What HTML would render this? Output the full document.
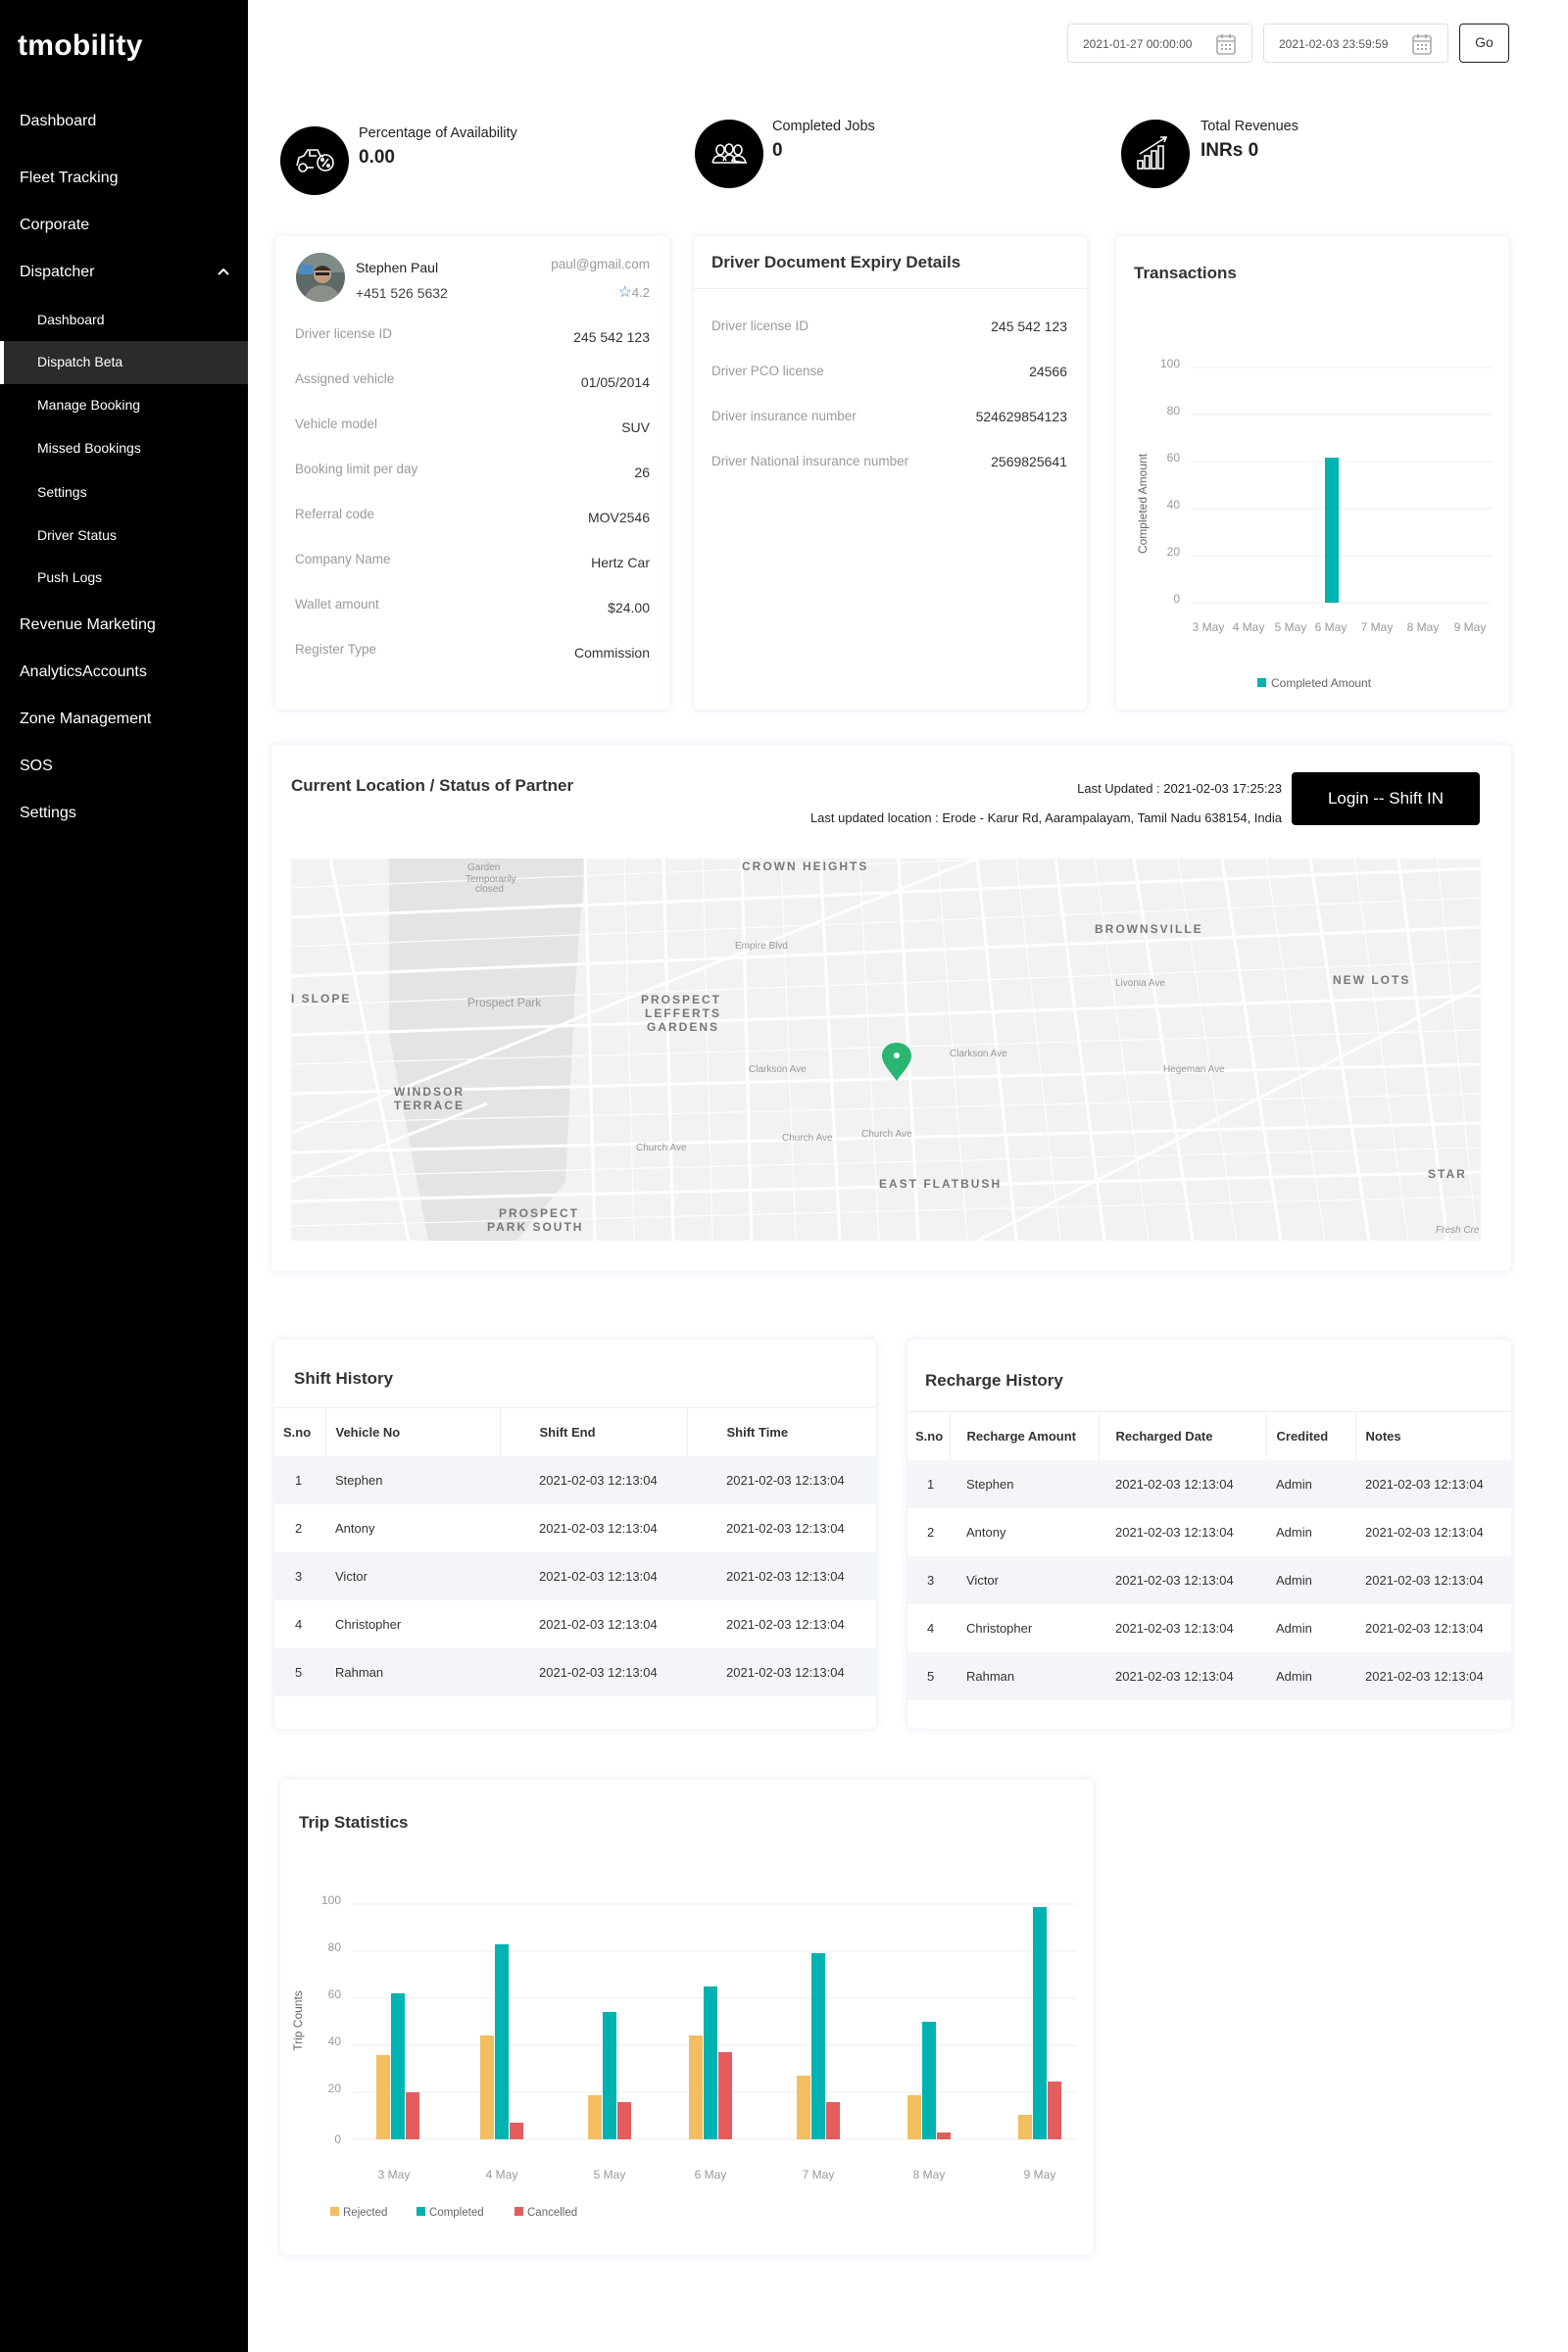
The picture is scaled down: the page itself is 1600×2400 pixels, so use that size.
<!DOCTYPE html>
<html><head><meta charset="utf-8">
<style>
*{margin:0;padding:0;box-sizing:border-box}
body{width:1600px;height:2400px;background:#fff;font-family:"Liberation Sans",sans-serif;color:#333;position:relative;overflow:hidden}
.a{position:absolute}
#side{left:0;top:0;width:253px;height:2400px;background:#000;color:#fff}
#side .m{position:absolute;left:20px;font-size:16px;color:#fff}
#side .s{position:absolute;left:38px;font-size:14px;color:#fff}
.card{position:absolute;background:#fff;border-radius:6px;box-shadow:0 0 6px 2px rgba(200,215,240,.35)}
.lbl{position:absolute;left:20px;font-size:13.5px;color:#9a9a9a}
.val{position:absolute;right:20px;font-size:14px;color:#333}
.inp{position:absolute;top:24px;height:40px;border:1px solid #ddd;border-radius:4px;font-size:12px;color:#555;padding:13px 0 0 15px}
.cal{position:absolute;right:16px;top:9px}
.stt{font-size:14.5px;color:#222}
.stv{font-size:19px;font-weight:bold;color:#222;margin-top:6px}
.circ{position:absolute;width:70px;height:70px;border-radius:50%;background:#000}
table{border-collapse:collapse;font-size:13px;color:#333;width:100%}
th{font-weight:bold;text-align:left;height:49px;font-size:13px;color:#333}
td{height:49px}
tbody tr:nth-child(odd){background:#f4f5f8}
h3{font-size:17px;font-weight:bold;color:#333;position:absolute}
</style></head><body>
<div id="side" class="a">
<div class="a" style="left:18px;top:30px;font-size:30px;font-weight:bold;letter-spacing:0.3px">tmobility</div>
<div class="m" style="top:115px">Dashboard</div>
<div class="m" style="top:173px">Fleet Tracking</div>
<div class="m" style="top:221px">Corporate</div>
<div class="m" style="top:269px">Dispatcher</div>
<svg class="a" style="left:221px;top:272px" width="14" height="10"><path d="M2 8 L7 3 L12 8" stroke="#fff" stroke-width="2" fill="none"/></svg>
<div class="s" style="top:318px">Dashboard</div>
<div class="a" style="left:0;top:348px;width:253px;height:44px;background:#2b2b2b;border-left:4px solid #fff"></div>
<div class="s" style="top:361px">Dispatch Beta</div>
<div class="s" style="top:405px">Manage Booking</div>
<div class="s" style="top:449px">Missed Bookings</div>
<div class="s" style="top:494px">Settings</div>
<div class="s" style="top:538px">Driver Status</div>
<div class="s" style="top:581px">Push Logs</div>
<div class="m" style="top:629px">Revenue Marketing</div>
<div class="m" style="top:677px">AnalyticsAccounts</div>
<div class="m" style="top:725px">Zone Management</div>
<div class="m" style="top:773px">SOS</div>
<div class="m" style="top:821px">Settings</div>
</div>

<!-- top inputs -->
<div class="inp" style="left:1089px;width:189px">2021-01-27 00:00:00
<svg class="cal" width="20" height="22" viewBox="0 0 20 22"><rect x="1" y="3" width="18" height="18" rx="2" fill="none" stroke="#aaa" stroke-width="1.6"/><line x1="1" y1="8" x2="19" y2="8" stroke="#aaa" stroke-width="1.6"/><line x1="6" y1="1" x2="6" y2="5" stroke="#aaa" stroke-width="2"/><line x1="14" y1="1" x2="14" y2="5" stroke="#aaa" stroke-width="2"/><g fill="#aaa"><rect x="5" y="11" width="2" height="2"/><rect x="9" y="11" width="2" height="2"/><rect x="13" y="11" width="2" height="2"/><rect x="5" y="15" width="2" height="2"/><rect x="9" y="15" width="2" height="2"/><rect x="13" y="15" width="2" height="2"/></g></svg></div>
<div class="inp" style="left:1289px;width:189px">2021-02-03 23:59:59
<svg class="cal" width="20" height="22" viewBox="0 0 20 22"><rect x="1" y="3" width="18" height="18" rx="2" fill="none" stroke="#aaa" stroke-width="1.6"/><line x1="1" y1="8" x2="19" y2="8" stroke="#aaa" stroke-width="1.6"/><line x1="6" y1="1" x2="6" y2="5" stroke="#aaa" stroke-width="2"/><line x1="14" y1="1" x2="14" y2="5" stroke="#aaa" stroke-width="2"/><g fill="#aaa"><rect x="5" y="11" width="2" height="2"/><rect x="9" y="11" width="2" height="2"/><rect x="13" y="11" width="2" height="2"/><rect x="5" y="15" width="2" height="2"/><rect x="9" y="15" width="2" height="2"/><rect x="13" y="15" width="2" height="2"/></g></svg></div>
<div class="a" style="left:1489px;top:24px;width:51px;height:40px;border:1.5px solid #222;border-radius:4px;font-size:14px;text-align:center;line-height:37px">Go</div>

<!-- stats -->
<div class="circ" style="left:286px;top:129px"><svg width="70" height="70" viewBox="0 0 70 70"><g stroke="#fff" stroke-width="1.6" fill="none"><path d="M17 40 L19 32 L24 30 L28 24 L38 24 L41 30 L44 31"/><circle cx="23" cy="42" r="4"/><path d="M27 42 L34 42"/><circle cx="46" cy="37" r="8"/><path d="M43 41 L49 33"/><circle cx="43" cy="34" r="1.2"/><circle cx="49" cy="40" r="1.2"/><path d="M30 25 L30 30 L37 30"/></g></svg></div>
<div class="a" style="left:366px;top:128px"><div class="stt">Percentage of Availability</div><div class="stv">0.00</div></div>
<div class="circ" style="left:709px;top:122px"><svg width="70" height="70" viewBox="0 0 70 70"><g stroke="#fff" stroke-width="1.6" fill="none"><ellipse cx="26" cy="31" rx="4" ry="5"/><ellipse cx="35" cy="30" rx="4" ry="5"/><ellipse cx="44" cy="31" rx="4" ry="5"/><path d="M18 44 Q20 36 26 37 Q30 37 32 42 M29 42 Q31 36 35 36 Q40 36 41 42 M38 42 Q40 37 44 37 Q50 37 52 44 Z M18 44 L52 44"/></g></svg></div>
<div class="a" style="left:788px;top:121px"><div class="stt">Completed Jobs</div><div class="stv">0</div></div>
<div class="circ" style="left:1144px;top:122px"><svg width="70" height="70" viewBox="0 0 70 70"><g stroke="#fff" stroke-width="1.6" fill="none"><rect x="17" y="42" width="5" height="8"/><rect x="24" y="37" width="5" height="13"/><rect x="31" y="32" width="5" height="18"/><rect x="38" y="27" width="5" height="23"/><path d="M19 35 L46 18 M40 18 L46 18 L44 23"/></g></svg></div>
<div class="a" style="left:1225px;top:121px"><div class="stt">Total Revenues</div><div class="stv">INRs 0</div></div>

<!-- card 1 -->
<div class="card" style="left:281px;top:241px;width:402px;height:483px">
<svg class="a" style="left:21px;top:17px" width="50" height="50" viewBox="0 0 50 50"><defs><clipPath id="cp"><circle cx="25" cy="25" r="25"/></clipPath></defs><g clip-path="url(#cp)"><rect width="50" height="50" fill="#5e6a6a"/><rect x="0" y="0" width="50" height="20" fill="#7f8b86"/><rect x="3" y="12" width="14" height="10" fill="#4a8ac0"/><circle cx="27" cy="22" r="9" fill="#c49a7c"/><path d="M18 18 Q27 8 36 18" fill="#3a2d25"/><path d="M8 50 Q12 33 27 33 Q42 33 46 50 Z" fill="#8a8f88"/><rect x="20" y="20" width="14" height="3" fill="#222"/></g></svg>
<div class="a" style="left:82px;top:24px;font-size:14px;color:#222">Stephen Paul</div>
<div class="a" style="left:82px;top:50px;font-size:14px;color:#444">+451 526 5632</div>
<div class="a" style="right:20px;top:21px;font-size:13.5px;color:#999">paul@gmail.com</div>
<div class="a" style="right:20px;top:47px;font-size:13px;color:#999"><span style="color:#3a7de0;font-size:16px">☆</span>4.2</div>
<div class="lbl" style="top:92px">Driver license ID</div><div class="val" style="top:95px">245 542 123</div>
<div class="lbl" style="top:138px">Assigned vehicle</div><div class="val" style="top:141px">01/05/2014</div>
<div class="lbl" style="top:184px">Vehicle model</div><div class="val" style="top:187px">SUV</div>
<div class="lbl" style="top:230px">Booking limit per day</div><div class="val" style="top:233px">26</div>
<div class="lbl" style="top:276px">Referral code</div><div class="val" style="top:279px">MOV2546</div>
<div class="lbl" style="top:322px">Company Name</div><div class="val" style="top:325px">Hertz Car</div>
<div class="lbl" style="top:368px">Wallet amount</div><div class="val" style="top:371px">$24.00</div>
<div class="lbl" style="top:414px">Register Type</div><div class="val" style="top:417px">Commission</div>
</div>

<!-- card 2 -->
<div class="card" style="left:708px;top:241px;width:401px;height:483px">
<h3 style="left:18px;top:17px">Driver Document Expiry Details</h3>
<div class="a" style="left:0;top:53px;width:401px;height:1px;background:#eee"></div>
<div class="lbl" style="top:84px;left:18px">Driver license ID</div><div class="val" style="top:84px">245 542 123</div>
<div class="lbl" style="top:130px;left:18px">Driver PCO license</div><div class="val" style="top:130px">24566</div>
<div class="lbl" style="top:176px;left:18px">Driver insurance number</div><div class="val" style="top:176px">524629854123</div>
<div class="lbl" style="top:222px;left:18px">Driver National insurance number</div><div class="val" style="top:222px">2569825641</div>
</div>

<!-- card 3 -->
<div class="card" style="left:1139px;top:241px;width:401px;height:483px">
<h3 style="left:18px;top:28px">Transactions</h3>
<svg class="a" style="left:0;top:0" width="401" height="483" font-family="Liberation Sans, sans-serif" font-size="12" fill="#999">
<g stroke="#eee" stroke-width="1"><line x1="76" y1="134" x2="383" y2="134"/><line x1="76" y1="182" x2="383" y2="182"/><line x1="76" y1="230" x2="383" y2="230"/><line x1="76" y1="278" x2="383" y2="278"/><line x1="76" y1="326" x2="383" y2="326"/><line x1="76" y1="374" x2="383" y2="374"/></g>
<g text-anchor="end"><text x="65" y="134">100</text><text x="65" y="182">80</text><text x="65" y="230">60</text><text x="65" y="278">40</text><text x="65" y="326">20</text><text x="65" y="374">0</text></g>
<rect x="213" y="226" width="14" height="148" fill="#00b2b0"/>
<g text-anchor="middle"><text x="94" y="403">3 May</text><text x="135" y="403">4 May</text><text x="178" y="403">5 May</text><text x="219" y="403">6 May</text><text x="266" y="403">7 May</text><text x="313" y="403">8 May</text><text x="361" y="403">9 May</text></g>
<text transform="translate(31,273) rotate(-90)" text-anchor="middle" fill="#666" font-size="12">Completed Amount</text>
<rect x="144" y="451" width="9" height="9" fill="#00b2b0"/><text x="158" y="460" fill="#666">Completed Amount</text>
</svg>
</div>

<!-- map card -->
<div class="card" style="left:277px;top:760px;width:1265px;height:537px">
<h3 style="left:20px;top:32px">Current Location / Status of Partner</h3>
<div class="a" style="right:234px;top:37px;font-size:13px;color:#222">Last Updated : 2021-02-03 17:25:23</div>
<div class="a" style="right:234px;top:67px;font-size:13px;color:#222">Last updated location : Erode - Karur Rd, Aarampalayam, Tamil Nadu 638154, India</div>
<div class="a" style="left:1041px;top:28px;width:192px;height:54px;background:#000;border-radius:4px;color:#fff;font-size:17px;text-align:center;line-height:54px">Login -- Shift IN</div>
<svg class="a" style="left:20px;top:116px" width="1214" height="390" viewBox="0 0 1214 390" font-family="Liberation Sans, sans-serif">
<rect width="1214" height="390" fill="#f2f2f2"/>
<path d="M100 0 L300 0 L290 130 L280 330 L230 390 L140 390 L100 180 Z" fill="#e4e4e4"/>
<g stroke="#fff" stroke-width="3" fill="none">
<path d="M0 60 L1214 10"/><path d="M0 120 L1214 70"/><path d="M0 180 L1214 140"/><path d="M0 240 L1214 210"/><path d="M0 300 L1214 270"/><path d="M0 350 L1214 320"/>
<path d="M300 0 L310 390"/><path d="M380 0 L390 390"/><path d="M460 0 L470 390"/><path d="M540 0 L560 390"/><path d="M620 0 L640 390"/><path d="M700 0 L740 390"/><path d="M780 0 L830 390"/><path d="M860 0 L920 390"/><path d="M950 0 L1010 390"/><path d="M1040 0 L1100 390"/><path d="M1130 0 L1180 390"/>
<path d="M0 280 L300 160 L700 0"/><path d="M700 390 L1214 130"/><path d="M40 0 L120 390"/><path d="M0 330 L200 250"/>
</g>
<g stroke="#fff" stroke-width="1.2" fill="none" opacity=".9">
<path d="M0 30 L1214 -20 M0 90 L1214 40 M0 150 L1214 105 M0 210 L1214 175 M0 270 L1214 240 M0 325 L1214 295 M0 375 L1214 345"/>
<path d="M340 0 L350 390 M420 0 L430 390 M500 0 L515 390 M580 0 L600 390 M660 0 L690 390 M740 0 L785 390 M820 0 L875 390 M905 0 L965 390 M995 0 L1055 390 M1085 0 L1140 390 M1170 0 L1210 390"/>
</g>
<g fill="#777" font-size="12" font-weight="bold" letter-spacing="2">
<text x="460" y="12">CROWN HEIGHTS</text><text x="820" y="76">BROWNSVILLE</text><text x="1063" y="128">NEW LOTS</text><text x="0" y="147">I SLOPE</text>
<text x="357" y="148">PROSPECT</text><text x="361" y="162">LEFFERTS</text><text x="363" y="176">GARDENS</text>
<text x="105" y="242">WINDSOR</text><text x="105" y="256">TERRACE</text><text x="600" y="336">EAST FLATBUSH</text>
<text x="212" y="366">PROSPECT</text><text x="200" y="380">PARK SOUTH</text><text x="1160" y="326">STAR</text>
</g>
<g fill="#999" font-size="10">
<text x="180" y="12">Garden</text><text x="178" y="24">Temporarily</text><text x="188" y="34">closed</text>
<text x="180" y="151" font-size="12">Prospect Park</text><text x="453" y="92">Empire Blvd</text><text x="467" y="218">Clarkson Ave</text><text x="672" y="202">Clarkson Ave</text>
<text x="501" y="288">Church Ave</text><text x="582" y="284">Church Ave</text><text x="352" y="298">Church Ave</text><text x="890" y="218">Hegeman Ave</text><text x="841" y="130">Livonia Ave</text><text x="1168" y="382" font-style="italic">Fresh Cre</text>
</g>
<path d="M619 188 C609 188 604 195 604 201 C604 210 613 218 619 227 C625 218 634 210 634 201 C634 195 629 188 619 188 Z" fill="#2bb573" transform="translate(-1,0) scale(1)"/>
<circle cx="618" cy="201" r="3" fill="#fff"/>
</svg>
</div>

<!-- shift history -->
<div class="card" style="left:280px;top:1367px;width:614px;height:397px">
<h3 style="left:20px;top:30px">Shift History</h3>
<div class="a" style="left:0;top:69px;width:614px">
<table><thead><tr style="border-top:1px solid #eee"><th style="width:52px;padding-left:9px;border-right:1px solid #eee">S.no</th><th style="width:178px;padding-left:10px;border-right:1px solid #eee">Vehicle No</th><th style="width:191px;padding-left:40px;border-right:1px solid #eee">Shift End</th><th style="padding-left:40px">Shift Time</th></tr></thead>
<tbody>
<tr><td style="padding-left:21px">1</td><td style="padding-left:10px">Stephen</td><td style="padding-left:40px">2021-02-03 12:13:04</td><td style="padding-left:40px">2021-02-03 12:13:04</td></tr>
<tr><td style="padding-left:21px">2</td><td style="padding-left:10px">Antony</td><td style="padding-left:40px">2021-02-03 12:13:04</td><td style="padding-left:40px">2021-02-03 12:13:04</td></tr>
<tr><td style="padding-left:21px">3</td><td style="padding-left:10px">Victor</td><td style="padding-left:40px">2021-02-03 12:13:04</td><td style="padding-left:40px">2021-02-03 12:13:04</td></tr>
<tr><td style="padding-left:21px">4</td><td style="padding-left:10px">Christopher</td><td style="padding-left:40px">2021-02-03 12:13:04</td><td style="padding-left:40px">2021-02-03 12:13:04</td></tr>
<tr><td style="padding-left:21px">5</td><td style="padding-left:10px">Rahman</td><td style="padding-left:40px">2021-02-03 12:13:04</td><td style="padding-left:40px">2021-02-03 12:13:04</td></tr>
</tbody></table></div>
</div>

<!-- recharge history -->
<div class="card" style="left:926px;top:1367px;width:616px;height:397px">
<h3 style="left:18px;top:32px">Recharge History</h3>
<div class="a" style="left:0;top:73px;width:616px">
<table><thead><tr style="border-top:1px solid #eee"><th style="width:43px;padding-left:8px;border-right:1px solid #eee">S.no</th><th style="width:152px;padding-left:17px;border-right:1px solid #eee">Recharge Amount</th><th style="width:171px;padding-left:17px;border-right:1px solid #eee">Recharged Date</th><th style="width:91px;padding-left:10px;border-right:1px solid #eee">Credited</th><th style="padding-left:10px">Notes</th></tr></thead>
<tbody>
<tr><td style="padding-left:20px">1</td><td style="padding-left:17px">Stephen</td><td style="padding-left:17px">2021-02-03 12:13:04</td><td style="padding-left:10px">Admin</td><td style="padding-left:10px">2021-02-03 12:13:04</td></tr>
<tr><td style="padding-left:20px">2</td><td style="padding-left:17px">Antony</td><td style="padding-left:17px">2021-02-03 12:13:04</td><td style="padding-left:10px">Admin</td><td style="padding-left:10px">2021-02-03 12:13:04</td></tr>
<tr><td style="padding-left:20px">3</td><td style="padding-left:17px">Victor</td><td style="padding-left:17px">2021-02-03 12:13:04</td><td style="padding-left:10px">Admin</td><td style="padding-left:10px">2021-02-03 12:13:04</td></tr>
<tr><td style="padding-left:20px">4</td><td style="padding-left:17px">Christopher</td><td style="padding-left:17px">2021-02-03 12:13:04</td><td style="padding-left:10px">Admin</td><td style="padding-left:10px">2021-02-03 12:13:04</td></tr>
<tr><td style="padding-left:20px">5</td><td style="padding-left:17px">Rahman</td><td style="padding-left:17px">2021-02-03 12:13:04</td><td style="padding-left:10px">Admin</td><td style="padding-left:10px">2021-02-03 12:13:04</td></tr>
</tbody></table></div>
</div>

<!-- trip statistics -->
<div class="card" style="left:286px;top:1816px;width:830px;height:485px">
<h3 style="left:19px;top:34px">Trip Statistics</h3>
<svg class="a" style="left:0;top:0" width="830" height="485" font-family="Liberation Sans, sans-serif" font-size="12" fill="#999">
<g stroke="#eee"><line x1="73" y1="127" x2="813" y2="127"/><line x1="73" y1="175" x2="813" y2="175"/><line x1="73" y1="223" x2="813" y2="223"/><line x1="73" y1="271" x2="813" y2="271"/><line x1="73" y1="319" x2="813" y2="319"/><line x1="73" y1="367" x2="813" y2="367"/></g>
<g text-anchor="end"><text x="62" y="127">100</text><text x="62" y="175">80</text><text x="62" y="223">60</text><text x="62" y="271">40</text><text x="62" y="319">20</text><text x="62" y="371">0</text></g>
<text transform="translate(22,246) rotate(-90)" text-anchor="middle" fill="#666">Trip Counts</text>
<g id="bars"></g>
<g>
<!-- 3 May c=120 -->
<rect x="98" y="281" width="14" height="86" fill="#f2be5f"/><rect x="113" y="218" width="14" height="149" fill="#00b2b0"/><rect x="128" y="319" width="14" height="48" fill="#e35d5f"/>
<rect x="204" y="261" width="14" height="106" fill="#f2be5f"/><rect x="219" y="168" width="14" height="199" fill="#00b2b0"/><rect x="234" y="350" width="14" height="17" fill="#e35d5f"/>
<rect x="314" y="322" width="14" height="45" fill="#f2be5f"/><rect x="329" y="237" width="14" height="130" fill="#00b2b0"/><rect x="344" y="329" width="14" height="38" fill="#e35d5f"/>
<rect x="417" y="261" width="14" height="106" fill="#f2be5f"/><rect x="432" y="211" width="14" height="156" fill="#00b2b0"/><rect x="447" y="278" width="14" height="89" fill="#e35d5f"/>
<rect x="527" y="302" width="14" height="65" fill="#f2be5f"/><rect x="542" y="177" width="14" height="190" fill="#00b2b0"/><rect x="557" y="329" width="14" height="38" fill="#e35d5f"/>
<rect x="640" y="322" width="14" height="45" fill="#f2be5f"/><rect x="655" y="247" width="14" height="120" fill="#00b2b0"/><rect x="670" y="360" width="14" height="7" fill="#e35d5f"/>
<rect x="753" y="342" width="14" height="25" fill="#f2be5f"/><rect x="768" y="130" width="14" height="237" fill="#00b2b0"/><rect x="783" y="308" width="14" height="59" fill="#e35d5f"/>
</g>
<g text-anchor="middle"><text x="116" y="407">3 May</text><text x="226" y="407">4 May</text><text x="336" y="407">5 May</text><text x="439" y="407">6 May</text><text x="549" y="407">7 May</text><text x="662" y="407">8 May</text><text x="775" y="407">9 May</text></g>
<g font-size="11.5" fill="#666"><rect x="51" y="436" width="9" height="9" fill="#f2be5f"/><text x="64" y="445">Rejected</text>
<rect x="139" y="436" width="9" height="9" fill="#00b2b0"/><text x="152" y="445">Completed</text>
<rect x="239" y="436" width="9" height="9" fill="#e35d5f"/><text x="252" y="445">Cancelled</text></g>
</svg>
</div>
</body></html>
